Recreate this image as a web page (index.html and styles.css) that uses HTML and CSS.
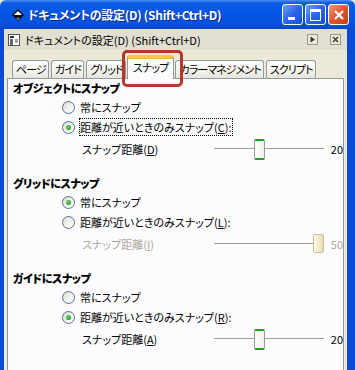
FILE: index.html
```html
<!DOCTYPE html>
<html>
    <head>
        <meta charset="UTF-8"/>
        <meta name="viewport" content="width=device-width, initial-scale=1">
        <link rel="stylesheet" href="styles.css">
    </head>
    <body>
        <div class="Window">
            <div class="TitleBar">
                <svg class="AppIcon" width="14" height="14" viewBox="0 0 14 14">
                    <path d="M7 1 L13 7 L7 13 L1 7 Z" fill="#111"/>
                    <path d="M7 3 L11 7 L7 7 L3 7 Z" fill="#fff"/>
                    <path d="M7 9 L9 11 L7 12 L5 11 Z" fill="#777"/>
                </svg>
                <span class="Title">ドキュメントの設定(D) (Shift+Ctrl+D)</span>
                <span class="Caption">
                    <button class="Min" title="Minimize"><i></i></button>
                    <button class="Max" title="Maximize"><i></i></button>
                    <button class="Close" title="Close">
                        <svg width="12" height="12" viewBox="0 0 12 12"><path d="M2 2 L10 10 M10 2 L2 10" stroke="#fff" stroke-width="2.2"/></svg>
                    </button>
                </span>
            </div>
            <div class="Frame">
                <div class="DockBar">
                    <svg class="DockIcon" width="14" height="14" viewBox="0 0 14 14">
                        <rect x="1.5" y="1.5" width="11" height="11" fill="#fff" stroke="#555"/>
                        <rect x="3" y="3" width="4" height="2" fill="#333"/>
                        <rect x="3" y="6" width="3" height="6" fill="#666"/>
                        <path d="M8 7 h3 M8 9 h3" stroke="#444"/>
                    </svg>
                    <span class="DockTitle">ドキュメントの設定(D) (Shift+Ctrl+D)</span>
                    <span class="DockButtons">
                        <button><svg width="7" height="7" viewBox="0 0 7 7"><path d="M1.5 0.5 L6 3.5 L1.5 6.5 Z" fill="#333"/></svg></button>
                        <button><svg width="7" height="7" viewBox="0 0 7 7"><path d="M1 1 L6 6 M6 1 L1 6" stroke="#333" stroke-width="1.4"/></svg></button>
                    </span>
                </div>
                <ul class="Tabs">
                    <li>ページ</li>
                    <li>ガイド</li>
                    <li>グリッド</li>
                    <li class="Active">スナップ</li>
                    <li>カラーマネジメント</li>
                    <li>スクリプト</li>
                </ul>
                <div class="Page">
                    <dl class="Group">
                        <dt>オブジェクトにスナップ</dt>
                        <dd class="Radio"><i></i><span>常にスナップ</span></dd>
                        <dd class="Radio Checked"><i></i><span class="Focus">距離が近いときのみスナップ(<u>C</u>):</span></dd>
                        <dd class="Slider">
                            <span class="Label">スナップ距離(<u>D</u>)</span>
                            <span class="Track"><i style="--v:.4"></i></span>
                            <span class="Value">20</span>
                        </dd>
                    </dl>
                    <dl class="Group">
                        <dt>グリッドにスナップ</dt>
                        <dd class="Radio Checked"><i></i><span>常にスナップ</span></dd>
                        <dd class="Radio"><i></i><span>距離が近いときのみスナップ(<u>L</u>):</span></dd>
                        <dd class="Slider Disabled">
                            <span class="Label">スナップ距離(<u>I</u>)</span>
                            <span class="Track"><i style="--v:1"></i></span>
                            <span class="Value">50</span>
                        </dd>
                    </dl>
                    <dl class="Group">
                        <dt>ガイドにスナップ</dt>
                        <dd class="Radio"><i></i><span>常にスナップ</span></dd>
                        <dd class="Radio Checked"><i></i><span>距離が近いときのみスナップ(<u>R</u>):</span></dd>
                        <dd class="Slider">
                            <span class="Label">スナップ距離(<u>A</u>)</span>
                            <span class="Track"><i style="--v:.4"></i></span>
                            <span class="Value">20</span>
                        </dd>
                    </dl>
                </div>
            </div>
            <div class="Highlight"></div>
        </div>
    </body>
</html>
```

FILE: styles.css
```css
body
{
    margin:0;
    font-family:"Noto Sans CJK JP", "Liberation Sans", sans-serif;
    font-size:11px;
    font-feature-settings:"palt";
    color:#000;
    background:#ece9d8;
    overflow:hidden;
}
.Window
{
    position:relative;
    width:355px;
    height:370px;
    display:flex;
    flex-direction:column;
}

/* title bar */
.TitleBar
{
    height:29px;
    display:flex;
    align-items:center;
    padding:0 6px 0 11px;
    background:linear-gradient(#4a8ff6 0, #0c5ce6 3px, #0456e4 40%, #0652df 75%, #0a49cc 100%);
    color:#fff;
    border-radius:6px 6px 0 0;
}
.AppIcon
{
    margin-right:3px;
}
.Title
{
    flex:1;
    font-size:12px;
    letter-spacing:-0.3px;
    font-weight:bold;
    text-shadow:1px 1px 0 #0a2a80;
    white-space:nowrap;
}
.Caption
{
    display:flex;
    gap:2px;
}
.Caption button
{
    width:21px;
    height:21px;
    padding:0;
    border:1px solid #fff;
    border-radius:3px;
    background:linear-gradient(135deg, #6ea0f8, #2b66ea 50%, #1a4fd6);
    position:relative;
    display:flex;
    align-items:center;
    justify-content:center;
}
.Caption .Min i
{
    position:absolute;
    left:5px;
    bottom:4px;
    width:7px;
    height:3px;
    background:#fff;
}
.Caption .Max i
{
    width:9px;
    height:8px;
    border:1px solid #fff;
    border-top-width:3px;
}
.Caption .Close
{
    background:linear-gradient(135deg, #f0a080, #e0542a 50%, #c8401a);
}

/* frame */
.Frame
{
    flex:1;
    display:flex;
    flex-direction:column;
    border-left:4px solid #0a4ad4;
    border-right:8px solid #0a4ad4;
    padding:0 3px 0 3px;
    background:#ece9d8;
}
.DockBar
{
    height:21px;
    display:flex;
    align-items:center;
    margin:0 -3px;
    padding:0 6px 0 3px;
    background:#e2dfd2;
}
.DockIcon
{
    margin-right:4px;
}
.DockTitle
{
    flex:1;
    white-space:nowrap;
}
.DockButtons
{
    display:flex;
    gap:12px;
}
.DockButtons button
{
    width:11px;
    height:11px;
    padding:0;
    border:1px solid #9a978a;
    background:#ece9d8;
    display:flex;
    align-items:center;
    justify-content:center;
}

/* tabs */
.Tabs
{
    height:28px;
    margin:0;
    padding:0 0 0 5px;
    list-style:none;
    display:flex;
    align-items:flex-end;
    gap:2px;
}
.Tabs li
{
    height:17px;
    line-height:16px;
    padding:0 2px 0 3px;
    letter-spacing:-0.9px;
    border:1px solid #919b9c;
    border-bottom:none;
    border-radius:3px 3px 0 0;
    background:linear-gradient(#ffffff, #f3f2ec 60%, #e6e4dc);
    white-space:nowrap;
}
.Tabs li.Active
{
    height:21px;
    line-height:18px;
    margin:0 -1px -1px;
    padding:0 5px;
    position:relative;
    border-top:3px solid #ffc73c;
    box-shadow:inset 0 1px 0 #f7b03a;
    background:#fcfcfe;
}

/* page */
.Page
{
    flex:1;
    border:1px solid #919b9c;
    border-bottom:none;
    background:#fcfcfe;
    padding:0 0 0 5px;
}
.Group
{
    margin:0 0 13px;
}
.Group dt
{
    height:18px;
    line-height:18px;
    font-weight:900;
    letter-spacing:-0.4px;
}
.Group dd
{
    margin:0;
}
.Radio
{
    height:20px;
    display:flex;
    align-items:center;
    padding-left:49px;
}
.Radio i
{
    width:11px;
    height:11px;
    border:1px solid #4f6f99;
    border-radius:50%;
    background:linear-gradient(135deg, #dcdad0, #f4f3ee 55%, #ffffff);
    margin-right:5px;
    display:flex;
    align-items:center;
    justify-content:center;
}
.Radio.Checked i::after
{
    content:"";
    width:5px;
    height:5px;
    border-radius:50%;
    background:radial-gradient(circle at 40% 40%, #6fd46f, #21a121 70%);
}
.Radio .Focus
{
    outline:1px dotted #000;
    outline-offset:0;
}
.Slider
{
    height:24px;
    display:flex;
    align-items:center;
    padding-left:69px;
}
.Slider .Label
{
    flex:1;
}
.Slider .Track
{
    width:110px;
    height:2px;
    position:relative;
    border-top:1px solid #9d9c99;
    border-bottom:1px solid #fff;
    box-sizing:border-box;
}
.Slider .Track i
{
    position:absolute;
    top:-10px;
    left:calc(var(--v) * (100% - 11px));
    width:9px;
    height:17px;
    border:1px solid #9a9a9a;
    border-top:2px solid #21a121;
    border-bottom:2px solid #21a121;
    border-radius:2px;
    background:linear-gradient(90deg, #fff, #f0efe8);
}
.Slider .Value
{
    width:19px;
    text-align:right;
}
.Slider.Disabled
{
    color:#aca899;
}
.Slider.Disabled .Track i
{
    border:1px solid #c9bf96;
    background:linear-gradient(90deg, #fffbe8, #e8dcb0);
}

/* annotation */
.Highlight
{
    position:absolute;
    left:122px;
    top:50px;
    width:55px;
    height:31px;
    border:3px solid #b5382c;
    border-radius:5px;
}
```
